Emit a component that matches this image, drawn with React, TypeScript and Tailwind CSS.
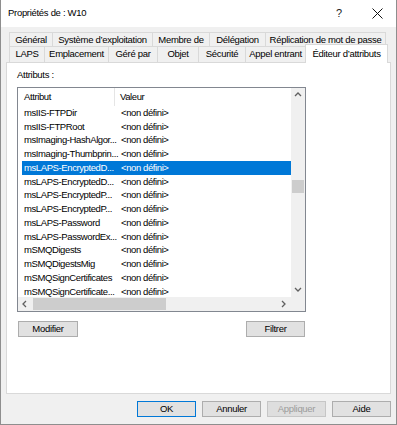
import React from "react";

const row1 = [
  { label: "Général", w: "w-[43px]" },
  { label: "Système d’exploitation", w: "w-[100px]" },
  { label: "Membre de", w: "w-[57px]" },
  { label: "Délégation", w: "w-[56px]" },
  { label: "Réplication de mot de passe", w: "w-[121px]" },
];

const row2 = [
  { label: "LAPS", w: "w-[35px]" },
  { label: "Emplacement", w: "w-[64px]" },
  { label: "Géré par", w: "w-[49px]" },
  { label: "Objet", w: "w-[41px]" },
  { label: "Sécurité", w: "w-[47px]" },
  { label: "Appel entrant", w: "w-[60px]" },
];

const attrs = [
  "msIIS-FTPDir",
  "msIIS-FTPRoot",
  "msImaging-HashAlgor...",
  "msImaging-Thumbprin...",
  "msLAPS-EncryptedD...",
  "msLAPS-EncryptedD...",
  "msLAPS-EncryptedP...",
  "msLAPS-EncryptedP...",
  "msLAPS-Password",
  "msLAPS-PasswordEx...",
  "mSMQDigests",
  "mSMQDigestsMig",
  "mSMQSignCertificates",
  "mSMQSignCertificate...",
];

function Chevron({ dir }: { dir: "up" | "down" | "left" | "right" }) {
  const pts = {
    up: "1,5 4,2 7,5",
    down: "1,2 4,5 7,2",
    left: "5,1 2,4 5,7",
    right: "2,1 5,4 2,7",
  }[dir];
  return (
    <svg width="8" height="8" viewBox="0 0 8 8">
      <polyline points={pts} fill="none" stroke="#606060" strokeWidth="1.3" />
    </svg>
  );
}

function Button({
  children,
  className = "",
  variant = "normal",
}: {
  children: React.ReactNode;
  className?: string;
  variant?: "normal" | "default" | "disabled";
}) {
  const look =
    variant === "default"
      ? "bg-[#e1e1e1] border-[#0078d7] text-black"
      : variant === "disabled"
        ? "bg-[#dedede] border-[#c6c6c6] text-[#9c9c9c]"
        : "bg-[#e1e1e1] border-[#adadad] text-black";
  return (
    <div
      className={`h-[16px] border flex items-center justify-center leading-none ${look} ${className}`}
    >
      {children}
    </div>
  );
}

export default function App() {
  return (
    <div className="w-[397px] h-[425px] bg-[#f0f0f0] border-x border-b border-[#8e8e8e] flex flex-col font-['Liberation_Sans',Arial,sans-serif] text-[9.5px] tracking-[-0.3px] text-black overflow-hidden">
      {/* title bar */}
      <div className="h-[27px] bg-white flex items-center shrink-0">
        <span className="pl-[7px] flex-1">Propriétés de : W10</span>
        <span className="w-[12px] text-center text-[11px] text-[#222] mr-[27px]">?</span>
        <svg width="11" height="11" viewBox="0 0 11 11" className="mr-[13px]">
          <path d="M0.5 0.5 L10.5 10.5 M10.5 0.5 L0.5 10.5" stroke="#111" strokeWidth="1" />
        </svg>
      </div>

      {/* tabs */}
      <div className="mt-[5px] ml-[8px] flex flex-col">
        <div className="flex h-[14px]">
          {row1.map((t, i) => (
            <div
              key={t.label}
              className={`${t.w} border-t border-l border-[#d9d9d9] flex items-center justify-center whitespace-nowrap pt-[1px] ${i === row1.length - 1 ? "border-r" : ""}`}
            >
              {t.label}
            </div>
          ))}
        </div>
        <div className="flex h-[16px] items-end">
          {row2.map((t) => (
            <div
              key={t.label}
              className={`${t.w} h-[16px] border-t border-l border-[#d9d9d9] flex items-center justify-center whitespace-nowrap`}
            >
              {t.label}
            </div>
          ))}
          <div className="relative z-10 top-[1px] w-[83px] h-[19px] bg-white border-t border-x border-[#d9d9d9] flex items-center justify-center whitespace-nowrap pt-[1px]">
            Éditeur d’attributs
          </div>
        </div>
      </div>

      {/* panel */}
      <div className="mx-[5px] h-[332px] bg-white border border-[#d9d9d9] flex flex-col pl-[10px]">
        <div className="pt-[6px] leading-[12px]">Attributs :</div>

        <div className="mt-[6px] w-[289px] h-[225px] border border-[#828790] flex flex-col">
          <div className="flex h-[209px]">
            <div className="w-[273px] overflow-hidden tracking-[-0.4px]">
              <div className="flex h-[18px] items-center">
                <div className="w-[97px] pl-[6px] h-full flex items-center border-r border-[#e5e5e5]">
                  Attribut
                </div>
                <div className="pl-[5px]">Valeur</div>
              </div>
              {attrs.map((a, i) => {
                const sel = i === 4;
                return (
                  <div key={i} className="h-[13.77px] pl-[4px]">
                    <div
                      className={`h-full flex items-center whitespace-nowrap ${sel ? "bg-[#0078d7] text-white" : ""}`}
                    >
                      <div className="w-[93px] shrink-0 pl-[2px]">{a}</div>
                      <div className="pl-[6px]">&lt;non défini&gt;</div>
                    </div>
                  </div>
                );
              })}
            </div>
            <div className="w-[14px] bg-[#f0f0f0] flex flex-col">
              <div className="h-[14px] flex items-center justify-center">
                <Chevron dir="up" />
              </div>
              <div className="flex-1 pt-[78px]">
                <div className="h-[13px] bg-[#cdcdcd] mx-[1px]" />
              </div>
              <div className="h-[14px] flex items-center justify-center">
                <Chevron dir="down" />
              </div>
            </div>
          </div>
          <div className="flex h-[14px]">
            <div className="w-[273px] bg-[#f0f0f0] flex items-center">
              <div className="w-[14px] flex items-center justify-center">
                <Chevron dir="left" />
              </div>
              <div className="flex-1 h-full py-[1px] pl-[1px]">
                <div className="w-[133px] h-full bg-[#cdcdcd]" />
              </div>
              <div className="w-[14px] flex items-center justify-center">
                <Chevron dir="right" />
              </div>
            </div>
            <div className="w-[14px] bg-[#f0f0f0]" />
          </div>
        </div>

        <div className="mt-[9px] w-[289px] flex justify-between">
          <Button className="w-[60px] ml-[1px]">Modifier</Button>
          <Button className="w-[59px] mr-[1px]">Filtrer</Button>
        </div>
      </div>

      {/* dialog buttons */}
      <div className="mt-[7px] pr-[5px] flex justify-end gap-[6px]">
        <Button variant="default" className="w-[59px]">OK</Button>
        <Button className="w-[59px]">Annuler</Button>
        <Button variant="disabled" className="w-[59px]">Appliquer</Button>
        <Button className="w-[59px]">Aide</Button>
      </div>
    </div>
  );
}
